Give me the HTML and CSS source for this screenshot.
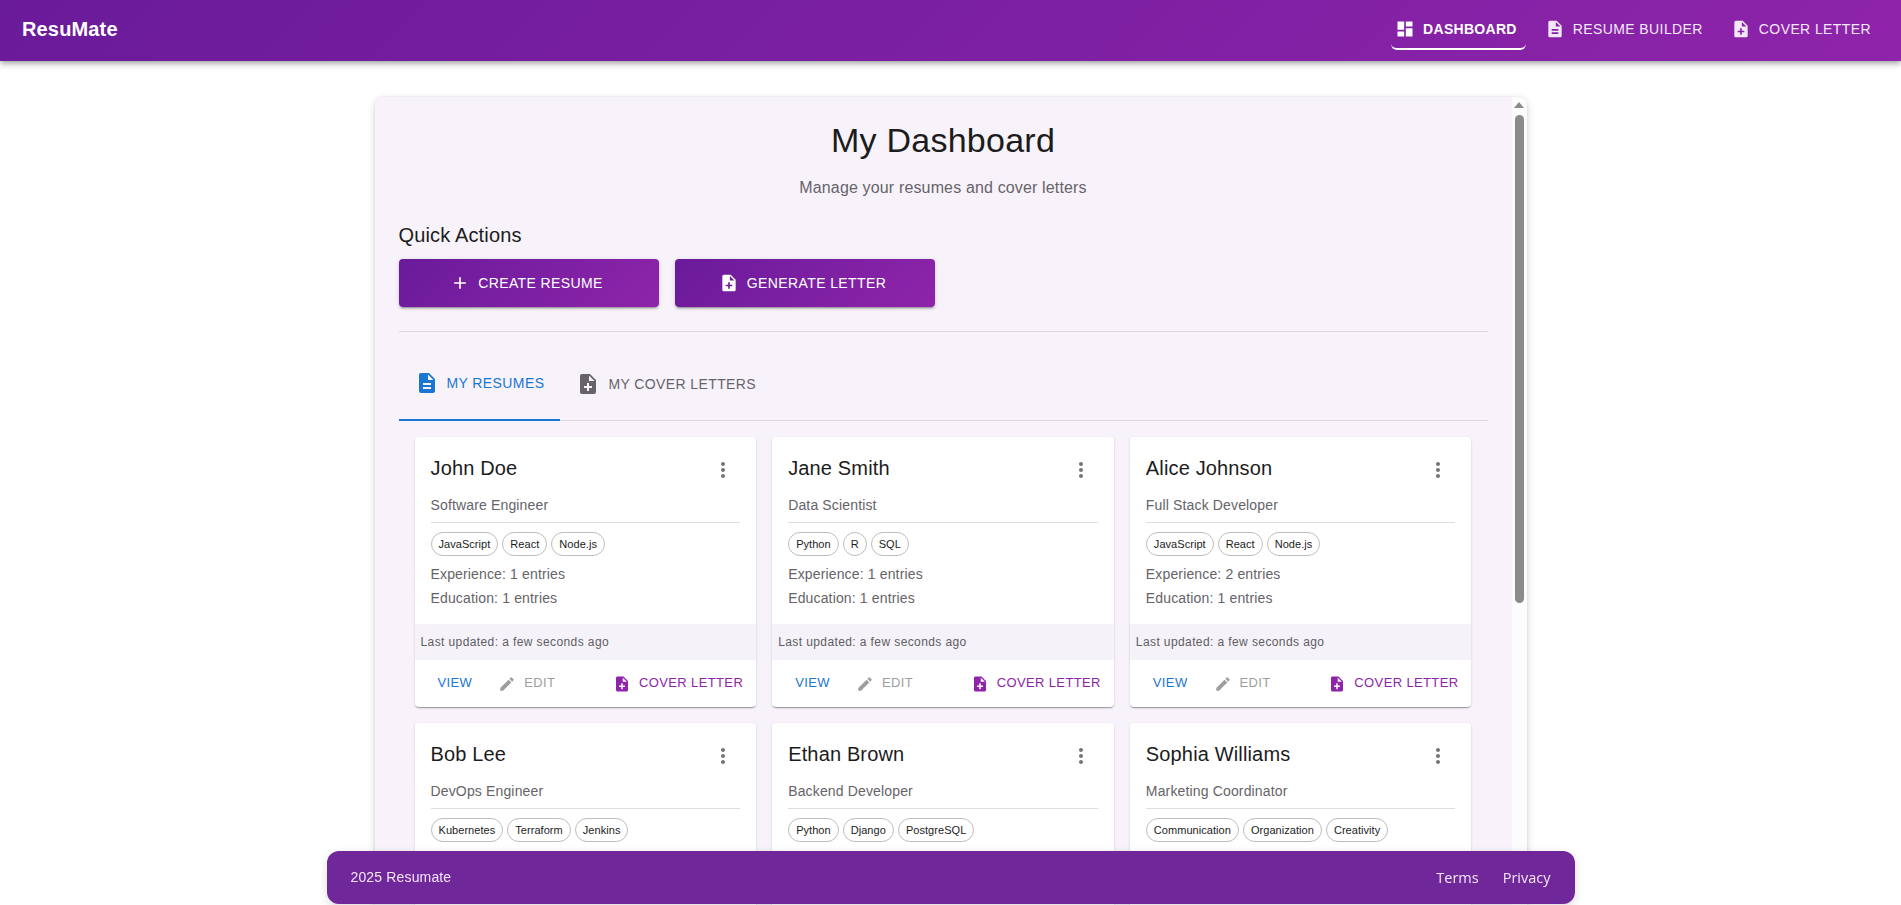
FILE: index.html
```html
<!DOCTYPE html>
<html lang="en">
<head>
  <meta charset="UTF-8" />
  <meta name="viewport" content="width=device-width, initial-scale=1.0">
  <title>ResuMate</title>
  <link rel="stylesheet" href="styles.css">
</head>
<body>
  <!-- Icon sprite -->
  <svg class="sprite" aria-hidden="true">
    <symbol id="i-dashboard" viewBox="0 0 24 24"><path d="M3 13h8V3H3v10zm0 8h8v-6H3v6zm10 0h8V11h-8v10zm0-18v6h8V3h-8z"/></symbol>
    <symbol id="i-doc" viewBox="0 0 24 24"><path d="M14 2H6c-1.1 0-1.99.9-1.99 2L4 20c0 1.1.89 2 1.99 2H18c1.1 0 2-.9 2-2V8l-6-6zm2 16H8v-2h8v2zm0-4H8v-2h8v2zm-3-5V3.5L18.5 9H13z"/></symbol>
    <symbol id="i-note" viewBox="0 0 24 24"><path d="M14 2H6c-1.1 0-1.99.9-1.99 2L4 20c0 1.1.89 2 1.99 2H18c1.1 0 2-.9 2-2V8l-6-6zm2 14h-3v3h-2v-3H8v-2h3v-3h2v3h3v2zm-3-7V3.5L18.5 9H13z"/></symbol>
    <symbol id="i-add" viewBox="0 0 24 24"><path d="M19 13h-6v6h-2v-6H5v-2h6V5h2v6h6v2z"/></symbol>
    <symbol id="i-edit" viewBox="0 0 24 24"><path d="M3 17.25V21h3.75L17.81 9.94l-3.75-3.75L3 17.25zM20.71 7.04c.39-.39.39-1.02 0-1.41l-2.34-2.34a.9959.9959 0 0 0-1.41 0l-1.83 1.83 3.75 3.75 1.83-1.83z"/></symbol>
    <symbol id="i-more" viewBox="0 0 24 24"><path d="M12 8c1.1 0 2-.9 2-2s-.9-2-2-2-2 .9-2 2 .9 2 2 2zm0 2c-1.1 0-2 .9-2 2s.9 2 2 2 2-.9 2-2-.9-2-2-2zm0 6c-1.1 0-2 .9-2 2s.9 2 2 2 2-.9 2-2-.9-2-2-2z"/></symbol>
  </svg>

  <header class="appbar">
    <a class="brand" href="#">ResuMate</a>
    <nav class="nav">
      <a class="nav-link active" href="#"><svg class="icon"><use href="#i-dashboard"/></svg>Dashboard</a>
      <a class="nav-link" href="#"><svg class="icon"><use href="#i-doc"/></svg>Resume Builder</a>
      <a class="nav-link" href="#"><svg class="icon"><use href="#i-note"/></svg>Cover Letter</a>
    </nav>
  </header>

  <main class="container">
    <section class="paper">
      <div class="paper-body">
        <h1 class="page-title">My Dashboard</h1>
        <p class="page-sub">Manage your resumes and cover letters</p>

        <h2 class="section-title">Quick Actions</h2>
        <div class="quick-actions">
          <button class="btn-main" type="button"><svg class="icon"><use href="#i-add"/></svg>Create Resume</button>
          <button class="btn-main" type="button"><svg class="icon"><use href="#i-note"/></svg>Generate Letter</button>
        </div>
        <hr class="divider">

        <div class="tabs">
          <a class="tab active" href="#"><svg class="icon"><use href="#i-doc"/></svg>My Resumes</a>
          <a class="tab" href="#"><svg class="icon"><use href="#i-note"/></svg>My Cover Letters</a>
        </div>

        <div class="cards">
          <article class="card">
            <div class="card-content">
              <div class="card-head">
                <h3 class="card-name">John Doe</h3>
                <svg class="icon more"><use href="#i-more"/></svg>
              </div>
              <p class="card-role">Software Engineer</p>
              <div class="chips"><span class="chip">JavaScript</span><span class="chip">React</span><span class="chip">Node.js</span></div>
              <p class="card-line">Experience: 1 entries</p>
              <p class="card-line">Education: 1 entries</p>
            </div>
            <div class="card-updated">Last updated: a few seconds ago</div>
            <div class="card-actions">
              <a class="act act-view" href="#">View</a>
              <a class="act act-edit" href="#"><svg class="icon"><use href="#i-edit"/></svg>Edit</a>
              <a class="act act-letter" href="#"><svg class="icon"><use href="#i-note"/></svg>Cover Letter</a>
            </div>
          </article>

          <article class="card">
            <div class="card-content">
              <div class="card-head">
                <h3 class="card-name">Jane Smith</h3>
                <svg class="icon more"><use href="#i-more"/></svg>
              </div>
              <p class="card-role">Data Scientist</p>
              <div class="chips"><span class="chip">Python</span><span class="chip">R</span><span class="chip">SQL</span></div>
              <p class="card-line">Experience: 1 entries</p>
              <p class="card-line">Education: 1 entries</p>
            </div>
            <div class="card-updated">Last updated: a few seconds ago</div>
            <div class="card-actions">
              <a class="act act-view" href="#">View</a>
              <a class="act act-edit" href="#"><svg class="icon"><use href="#i-edit"/></svg>Edit</a>
              <a class="act act-letter" href="#"><svg class="icon"><use href="#i-note"/></svg>Cover Letter</a>
            </div>
          </article>

          <article class="card">
            <div class="card-content">
              <div class="card-head">
                <h3 class="card-name">Alice Johnson</h3>
                <svg class="icon more"><use href="#i-more"/></svg>
              </div>
              <p class="card-role">Full Stack Developer</p>
              <div class="chips"><span class="chip">JavaScript</span><span class="chip">React</span><span class="chip">Node.js</span></div>
              <p class="card-line">Experience: 2 entries</p>
              <p class="card-line">Education: 1 entries</p>
            </div>
            <div class="card-updated">Last updated: a few seconds ago</div>
            <div class="card-actions">
              <a class="act act-view" href="#">View</a>
              <a class="act act-edit" href="#"><svg class="icon"><use href="#i-edit"/></svg>Edit</a>
              <a class="act act-letter" href="#"><svg class="icon"><use href="#i-note"/></svg>Cover Letter</a>
            </div>
          </article>

          <article class="card">
            <div class="card-content">
              <div class="card-head">
                <h3 class="card-name">Bob Lee</h3>
                <svg class="icon more"><use href="#i-more"/></svg>
              </div>
              <p class="card-role">DevOps Engineer</p>
              <div class="chips"><span class="chip">Kubernetes</span><span class="chip">Terraform</span><span class="chip">Jenkins</span></div>
            </div>
          </article>

          <article class="card">
            <div class="card-content">
              <div class="card-head">
                <h3 class="card-name">Ethan Brown</h3>
                <svg class="icon more"><use href="#i-more"/></svg>
              </div>
              <p class="card-role">Backend Developer</p>
              <div class="chips"><span class="chip">Python</span><span class="chip">Django</span><span class="chip">PostgreSQL</span></div>
            </div>
          </article>

          <article class="card">
            <div class="card-content">
              <div class="card-head">
                <h3 class="card-name">Sophia Williams</h3>
                <svg class="icon more"><use href="#i-more"/></svg>
              </div>
              <p class="card-role">Marketing Coordinator</p>
              <div class="chips"><span class="chip">Communication</span><span class="chip">Organization</span><span class="chip">Creativity</span></div>
            </div>
          </article>
        </div>
      </div>

      <div class="scroll-rail">
        <span class="scroll-arrow"></span>
        <span class="scroll-thumb"></span>
      </div>
    </section>
  </main>

  <footer class="footer">
    <span class="footer-copy">2025 Resumate</span>
    <div class="footer-links">
      <a href="#">Terms</a>
      <a href="#">Privacy</a>
    </div>
  </footer>
</body>
</html>
```

FILE: styles.css
```css
* {
  box-sizing: border-box;
}

html, body {
  height: 100%;
}

body {
  margin: 0;
  font-family: "Liberation Sans", Arial, sans-serif;
  background-color: #ffffff;
  color: #1c1c1c;
  display: flex;
  flex-direction: column;
  overflow: hidden;
}

a {
  color: inherit;
  text-decoration: none;
}

.sprite {
  display: none;
}

.icon {
  width: 20px;
  height: 20px;
  fill: currentColor;
  flex-shrink: 0;
}

/* App bar */
.appbar {
  height: 61px;
  flex-shrink: 0;
  display: flex;
  justify-content: space-between;
  align-items: center;
  padding: 0 21px 3px 22px;
  color: #ffffff;
  background: linear-gradient(135deg, #6a1b9a, #8e24aa);
  box-shadow: 0 2px 4px -1px rgba(0, 0, 0, 0.2), 0 4px 5px rgba(0, 0, 0, 0.14), 0 1px 10px rgba(0, 0, 0, 0.12);
  position: relative;
  z-index: 2;
}

.brand {
  font-size: 20px;
  font-weight: bold;
  letter-spacing: 0.15px;
}

.nav {
  display: flex;
  gap: 15px;
  margin-top: 3px;
}

.nav-link {
  height: 38px;
  display: flex;
  align-items: center;
  gap: 8px;
  padding: 0 9px 2px 4px;
  font-size: 14px;
  letter-spacing: 0.4px;
  text-transform: uppercase;
  color: #f3e8f8;
  border-bottom: 2px solid transparent;
}

.nav-link.active {
  color: #ffffff;
  font-weight: bold;
  letter-spacing: 0.3px;
  border-bottom-color: #ffffff;
  border-radius: 0 0 6px 6px;
}

/* Page */
.container {
  flex: 1;
  min-height: 0;
  width: 100%;
  max-width: 1200px;
  margin: 0 auto;
  padding: 36px 24px 0;
  display: flex;
}

.paper {
  flex: 1;
  min-width: 0;
  display: flex;
  background-color: #f8f3fb;
  border-radius: 8px 8px 0 0;
  box-shadow: 0 3px 8px rgba(0, 0, 0, 0.16), 0 0 3px rgba(0, 0, 0, 0.08);
  overflow: hidden;
}

.paper-body {
  flex: 1;
  min-width: 0;
  padding: 22px 24px 0;
}

.page-title {
  margin: 0;
  font-size: 34px;
  font-weight: normal;
  letter-spacing: 0.25px;
  line-height: 42px;
  text-align: center;
}

.page-sub {
  margin: 15px 0 0;
  font-size: 16px;
  letter-spacing: 0.15px;
  line-height: 24px;
  text-align: center;
  color: #666369;
}

.section-title {
  margin: 19px 0 0;
  font-size: 20px;
  font-weight: normal;
  letter-spacing: 0.15px;
  line-height: 32px;
}

.quick-actions {
  display: flex;
  gap: 16px;
  margin-top: 8px;
}

.btn-main {
  width: 260px;
  height: 48px;
  display: flex;
  justify-content: center;
  align-items: center;
  gap: 8px;
  padding: 0 4px 0 0;
  border: none;
  border-radius: 4px;
  font-family: inherit;
  font-size: 14px;
  letter-spacing: 0.4px;
  text-transform: uppercase;
  color: #ffffff;
  background: linear-gradient(135deg, #6a1b9a, #8e24aa);
  box-shadow: 0 3px 1px -2px rgba(0, 0, 0, 0.2), 0 2px 2px rgba(0, 0, 0, 0.14), 0 1px 5px rgba(0, 0, 0, 0.12);
  cursor: pointer;
}

.divider {
  margin: 24px 0 0;
  border: none;
  border-top: 1px solid #dcd9de;
}

/* Tabs */
.tabs {
  display: flex;
  height: 72px;
  margin-top: 17px;
  border-bottom: 1px solid #dcd9de;
}

.tab {
  height: 72px;
  display: flex;
  align-items: center;
  gap: 8px;
  padding: 0 16px 2px;
  font-size: 14px;
  letter-spacing: 0.4px;
  text-transform: uppercase;
  color: #666369;
}

.tab .icon {
  width: 24px;
  height: 24px;
}

.tab.active {
  color: #1976d2;
  border-bottom: 2px solid #1976d2;
}

/* Cards */
.cards {
  display: grid;
  grid-template-columns: repeat(3, 1fr);
  grid-auto-rows: 270px;
  gap: 16px;
  padding: 16px;
}

.card {
  display: flex;
  flex-direction: column;
  background-color: #ffffff;
  border-radius: 4px;
  box-shadow: 0 2px 1px -1px rgba(0, 0, 0, 0.2), 0 1px 1px rgba(0, 0, 0, 0.14), 0 1px 3px rgba(0, 0, 0, 0.12);
  overflow: hidden;
}

.card-content {
  flex: 1;
  padding: 16px 16px 0;
}

.card-head {
  display: flex;
  justify-content: space-between;
  align-items: center;
  height: 30px;
}

.card-name {
  margin: 0;
  font-size: 20px;
  font-weight: normal;
  letter-spacing: 0.15px;
}

.more {
  width: 24px;
  height: 24px;
  color: #757575;
  margin: 4px 5px 0 0;
}

.card-role {
  margin: 10px 0 0;
  padding-bottom: 7px;
  height: 30px;
  font-size: 14px;
  letter-spacing: 0.15px;
  line-height: 24px;
  color: #666369;
  border-bottom: 1px solid #dedede;
}

.chips {
  display: flex;
  gap: 4px;
  margin: 9px 0 6px;
}

.chip {
  height: 24px;
  padding: 0 7px;
  display: flex;
  align-items: center;
  font-size: 11px;
  letter-spacing: 0.05px;
  color: #1c1c1c;
  border: 1px solid #bdbdbd;
  border-radius: 12px;
}

.card-line {
  margin: 0;
  font-size: 14px;
  letter-spacing: 0.15px;
  line-height: 24px;
  color: #666369;
}

.card-updated {
  height: 36px;
  display: flex;
  align-items: center;
  padding: 0 6px;
  font-size: 12px;
  letter-spacing: 0.4px;
  color: #5f5d62;
  background-color: #f5f2f9;
}

.card-actions {
  height: 47px;
  display: flex;
  align-items: center;
  gap: 26px;
  padding: 0 13px 3px 23px;
  font-size: 13px;
}

.act {
  display: flex;
  align-items: center;
  gap: 8px;
  letter-spacing: 0.37px;
  text-transform: uppercase;
}

.act .icon {
  width: 18px;
  height: 18px;
  margin-top: 3px;
}

.act-view {
  color: #1976d2;
}

.act-edit {
  color: #9e9e9e;
}

.act-letter {
  margin-left: auto;
  color: #8e24aa;
}

/* Drawn scrollbar */
.scroll-rail {
  width: 15px;
  flex-shrink: 0;
  display: flex;
  flex-direction: column;
  align-items: center;
  padding-top: 5px;
  background-color: #fcfbfd;
}

.scroll-arrow {
  width: 0;
  height: 0;
  border-left: 5px solid transparent;
  border-right: 5px solid transparent;
  border-bottom: 6px solid #8b8b8b;
}

.scroll-thumb {
  width: 9px;
  height: 488px;
  margin-top: 7px;
  background-color: #8b8b8b;
  border-radius: 5px;
}

/* Footer over the page */
.footer {
  position: fixed;
  left: 326.5px;
  bottom: 1px;
  width: 1248px;
  height: 53px;
  display: flex;
  justify-content: space-between;
  align-items: center;
  padding: 0 24px;
  color: #f6e6fa;
  background-color: #70279a;
  border-radius: 12px;
  box-shadow: 0 3px 10px rgba(0, 0, 0, 0.14);
  z-index: 3;
}

.footer-copy {
  font-size: 14px;
  letter-spacing: 0.15px;
  margin-top: -2px;
}

.footer-links {
  display: flex;
  gap: 24px;
  font-family: "Open Sans", "Noto Sans", sans-serif;
  font-size: 14.5px;
}
```
